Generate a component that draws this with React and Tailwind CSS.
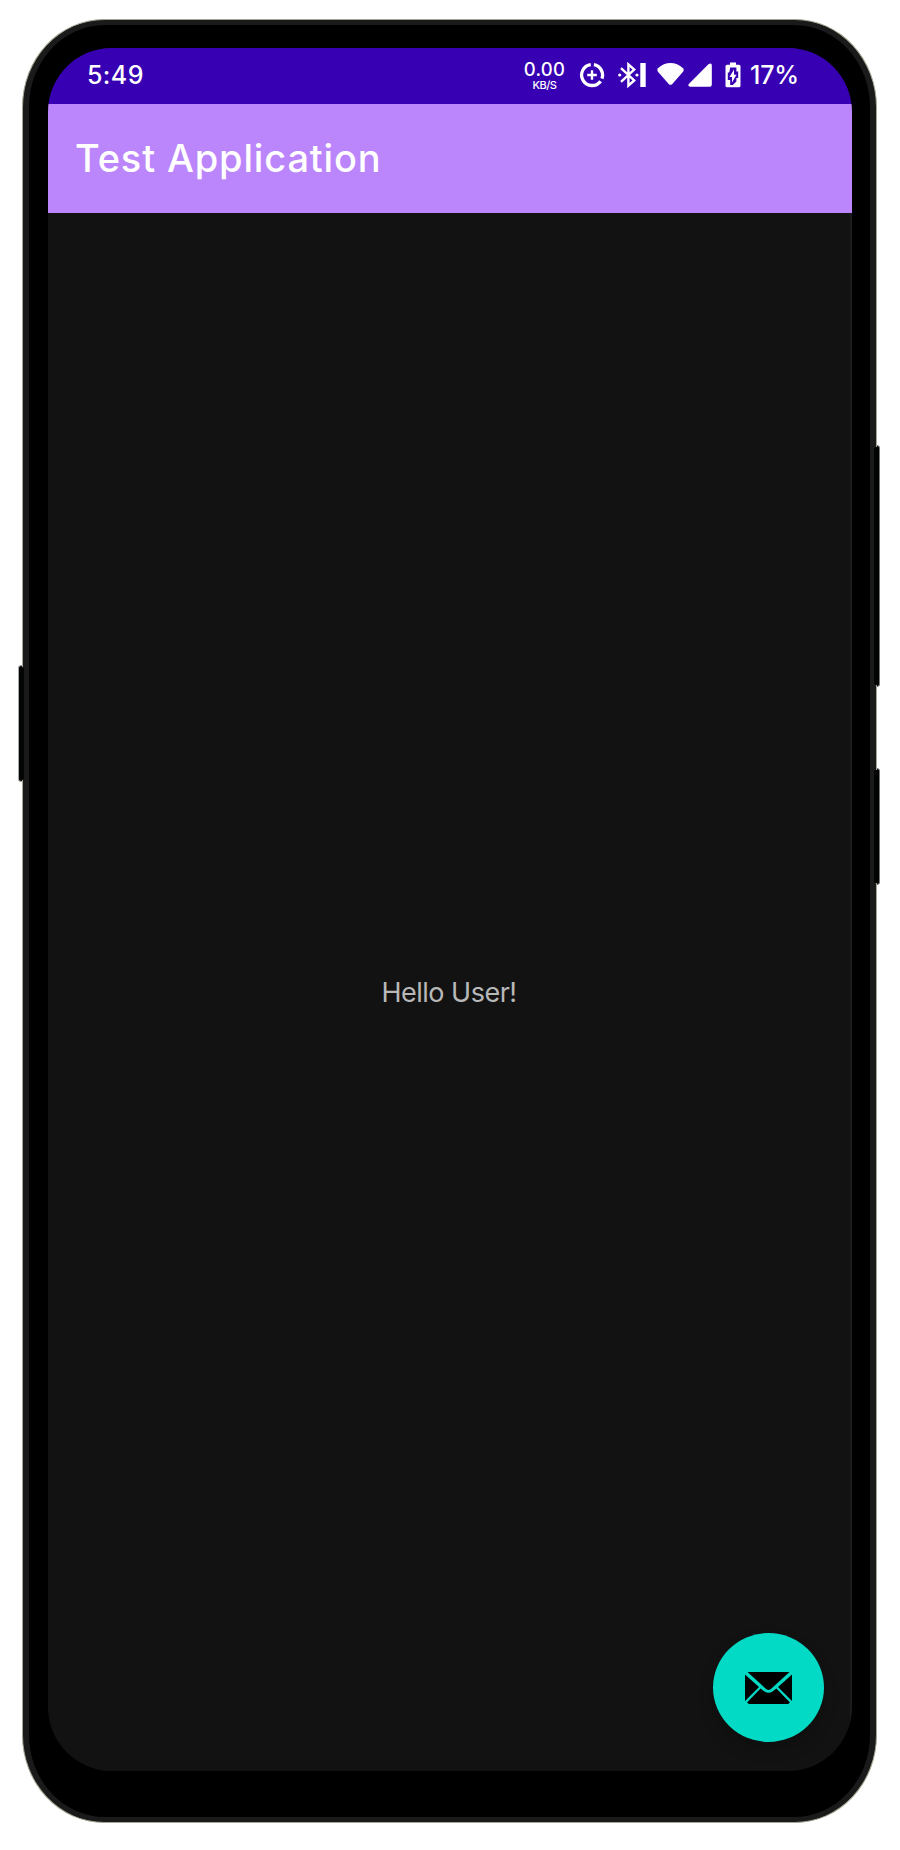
function DataSaverIcon() {
  return (
    <svg className="ml-[12px] h-[26px] w-[26px]" viewBox="0 0 26 26" fill="none" stroke="#fff">
      <path d="M11.8 2.6A10.5 10.5 0 1 0 21.6 19.2" strokeWidth="3.3" />
      <path d="M14.9 2.7A10.5 10.5 0 0 1 22.9 16.7" strokeWidth="3.3" />
      <path d="M13 8.2v9.6M8.2 13h9.6" strokeWidth="2.4" />
    </svg>
  );
}

function BluetoothIcon() {
  return (
    <svg className="ml-[12px] h-[26px] w-[29px]" viewBox="0 0 29 26">
      <path d="M4 6.2 17.2 18.4 11.4 23.6V2.4L17.2 7.6 4 19.8" fill="none" stroke="#fff" strokeWidth="2.4" />
      <circle cx="2.7" cy="13" r="1.6" fill="#fff" />
      <circle cx="20" cy="13" r="1.6" fill="#fff" />
      <path d="M23.3 1H28.7V25H23.3Z" fill="#fff" />
    </svg>
  );
}

function WifiIcon() {
  return (
    <svg className="ml-[11px] h-[26px] w-[27px]" viewBox="0 0 27 26">
      <path d="M1 6.2C8-.7 19-.7 26 6.2Q27.4 8 26 9.8L15.3 22Q13.5 23.7 11.7 22L1 9.8Q-.4 8 1 6.2Z" fill="#fff" />
    </svg>
  );
}

function SignalIcon() {
  return (
    <svg className="ml-[4px] h-[26px] w-[24px]" viewBox="0 0 24 26">
      <path d="M20.7 2.1Q23.8.2 23.8 3.6V22.8Q23.8 24.7 21.8 24.7H2Q-.9 24.2 1 21.7Z" fill="#fff" />
    </svg>
  );
}

function BatteryIcon() {
  return (
    <svg className="ml-[13px] h-[26px] w-[16px]" viewBox="0 0 16 26">
      <path d="M5 .5h6v2.3h3q1.5 0 1.5 1.5v19.4q0 1.5-1.500 1.500H2Q.5 25.200.5 23.700V4.300Q.5 2.800 2 2.800h3Z" fill="#fff" />
      <path d="M5.200 5.500h6.200v4h1.800v6.500h-1.800v3.500L7.800 23H5.200v-5H2.800v-7.500h1.400Z" fill="#3700b3" />
      <path d="M9 7.400v5.300h2.500L7 20.400v-5.300H4.500Z" fill="#fff" />
    </svg>
  );
}

function MailIcon() {
  return (
    <svg className="h-[32px] w-[47px]" viewBox="0 0 47 32">
      <path d="M2.500 0H44.500L27 16Q23.500 20 20 16Z" fill="#000" />
      <path d="M0 2.600 14 15 0 29Z M47 2.600 33 15 47 29Z" fill="#000" />
      <path d="M15.600 16.600 19.500 19.500Q23.500 22.200 27.500 19.500L31.400 16.600 45 30.500 43 32H4L2 30.500Z" fill="#000" />
    </svg>
  );
}

function StatusBar() {
  return (
    <div className="flex h-[56px] items-start bg-[#3700b3] pt-[14px] text-white">
      <span className="ml-[39px] mt-[-1px] w-[59px] whitespace-nowrap text-[25px] font-medium leading-[28px] tracking-[0.4px]">5:49</span>
      <div className="mt-[-1px] ml-[376px] flex w-[45px] flex-col items-center whitespace-nowrap">
        <span className="text-[18.5px] font-medium leading-[16px] tracking-[0.3px]">0.00</span>
        <span className="mt-[3px] text-[11px] font-medium leading-[11px] tracking-[-0.5px]">KB/S</span>
      </div>
      <DataSaverIcon />
      <BluetoothIcon />
      <WifiIcon />
      <SignalIcon />
      <BatteryIcon />
      <span className="ml-[9px] mt-[-1px] whitespace-nowrap text-[25px] font-medium leading-[28px] tracking-[-0.2px]">17%</span>
    </div>
  );
}

export default function App() {
  return (
    <div className="h-[1850px] w-[900px] overflow-hidden bg-white pl-[22px] pt-[19px] font-['Inter',sans-serif]">
      <div className="relative h-[1804px] w-[855px]">
        <div className="absolute left-[-4px] top-[646px] h-[117px] w-[8px] rounded-[3px] border border-[#aaa] bg-[#020504]" />
        <div className="absolute right-[-3px] top-[426px] h-[242px] w-[8px] rounded-[3px] border border-[#777] bg-[#020303]" />
        <div className="absolute right-[-3px] top-[749px] h-[117px] w-[8px] rounded-[3px] border border-[#777] bg-[#020303]" />
        <div className="relative h-full w-full rounded-[82px/88px] border border-[#a5a593] bg-[#1a1a1a] px-[6px] py-[5px]">
          <div className="h-full w-full rounded-[76px/82px] bg-black px-[19px] pb-[47px] pt-[23px]">
            <div className="relative flex h-[1723px] w-[804px] flex-col overflow-hidden rounded-[64px] bg-[#121212]">
              <StatusBar />
              <header className="flex h-[109px] items-center bg-[#bb86fc] pl-[27px] text-white">
                <h1 className="mt-[-2px] whitespace-nowrap text-[38px] font-medium leading-[48px] tracking-[0.85px]">Test Application</h1>
              </header>
              <main className="flex flex-1 items-center justify-center border-r-2 border-[#1c1c1c] text-[#b8b8b8]">
                <p className="mt-[2px] whitespace-nowrap text-[27px] leading-[32px] tracking-[-0.5px]">Hello User!</p>
              </main>
              <button className="absolute bottom-[29px] right-[28px] flex h-[109px] w-[111px] items-center justify-center rounded-[50%] bg-[#03dac5] shadow-[0_8px_16px_rgba(0,0,0,0.2)]">
                <MailIcon />
              </button>
            </div>
          </div>
        </div>
        <div className="absolute left-[-2px] top-[648px] h-[113px] w-[4px] rounded-[2px] bg-[#020504]" />
        <div className="absolute right-[-2px] top-[428px] h-[238px] w-[5px] rounded-[2px] bg-[#020303]" />
        <div className="absolute right-[-2px] top-[751px] h-[113px] w-[5px] rounded-[2px] bg-[#020303]" />
      </div>
    </div>
  );
}
